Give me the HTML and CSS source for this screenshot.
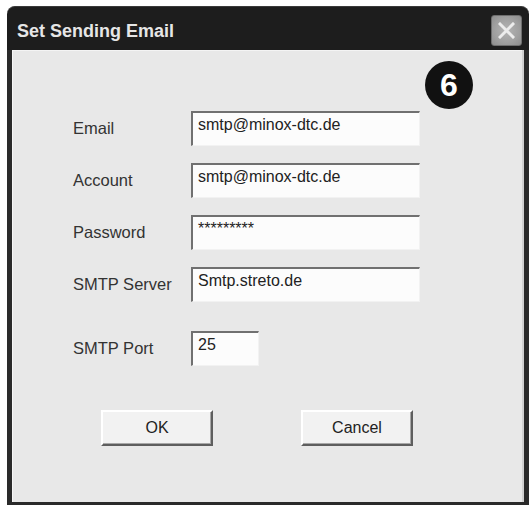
FILE: index.html
```html
<!DOCTYPE html>
<html>
<head>
<meta charset="utf-8">
<title>Set Sending Email</title>
<link rel="stylesheet" href="styles.css">
</head>
<body>
<div class="window">
  <div class="titlebar">
    <span class="title">Set Sending Email</span>
    <button class="close" aria-label="Close">
      <svg width="17" height="17" viewBox="0 0 17 17"><path d="M2 2 L15 15 M15 2 L2 15" stroke="#ececec" stroke-width="3" stroke-linecap="square"/></svg>
    </button>
  </div>
  <div class="body">
    <div class="badge">6</div>
    <div class="form">
      <div class="row"><span class="label">Email</span><div class="field wide">smtp@minox-dtc.de</div></div>
      <div class="row"><span class="label">Account</span><div class="field wide">smtp@minox-dtc.de</div></div>
      <div class="row"><span class="label">Password</span><div class="field wide pw">*********</div></div>
      <div class="row"><span class="label">SMTP Server</span><div class="field wide">Smtp.streto.de</div></div>
      <div class="row port"><span class="label">SMTP Port</span><div class="field short">25</div></div>
    </div>
    <div class="buttons">
      <button class="btn">OK</button>
      <button class="btn">Cancel</button>
    </div>
  </div>
</div>
</body>
</html>
```
FILE: styles.css
```css
body {
  margin: 0;
  background: #ffffff;
  font-family: "Liberation Sans", Arial, sans-serif;
}
.window {
  margin: 6px 0 0 7px;
  width: 522px;
  height: 499px;
  display: flex;
  flex-direction: column;
}
.titlebar {
  height: 44px;
  flex: none;
  box-sizing: border-box;
  background: #1d1d1d;
  border-radius: 8px 8px 0 0;
  border-top: 1px solid #3a3a3a;
  display: flex;
  align-items: center;
  justify-content: space-between;
  padding: 0 7px 0 10px;
}
.title {
  color: #e6e6e6;
  font-weight: bold;
  font-size: 18px;
  padding-top: 6px;
}
.close {
  width: 31px;
  height: 31px;
  margin-top: 3px;
  padding: 0;
  background: radial-gradient(circle at 50% 50%, #b4b4b4 0%, #a0a0a0 60%, #8e8e8e 100%);
  border: 1px solid #6e6e6e;
  border-radius: 3px;
  display: flex;
  align-items: center;
  justify-content: center;
}
.body {
  flex: 1;
  position: relative;
  background: #e8e8e8;
  border-style: solid;
  border-color: #2a2a2a;
  border-width: 0 5px 3px 5px;
  box-shadow: inset 1px 0 0 #f6f6f6, inset -2px 0 0 #d0d0d0, inset 0 1px 0 #f4f4f4;
  padding: 61px 0 0 61px;
}
.badge {
  position: absolute;
  left: 413px;
  top: 11px;
  width: 48px;
  height: 48px;
  border-radius: 50%;
  background: #111;
  color: #fff;
  font-weight: bold;
  font-size: 32px;
  display: flex;
  align-items: center;
  justify-content: center;
}
.form {
  display: flex;
  flex-direction: column;
  gap: 17px;
}
.row {
  display: grid;
  grid-template-columns: 118px auto;
  align-items: center;
}
.row.port {
  margin-top: 12px;
}
.label {
  font-size: 16.5px;
  color: #333;
}
.field {
  height: 35px;
  box-sizing: border-box;
  background: #fcfcfc;
  border-top: 2px solid #707070;
  border-left: 2px solid #707070;
  border-right: 1px solid #f2f2f2;
  border-bottom: 1px solid #f2f2f2;
  padding: 3px 0 0 5px;
  font-size: 16px;
  color: #222;
}
.field.wide {
  width: 229px;
}
.field.short {
  width: 68px;
}
.buttons {
  display: flex;
  gap: 88px;
  margin: 44px 0 0 28px;
}
.btn {
  width: 112px;
  height: 36px;
  background: #f2f2f2;
  border: 2px solid;
  border-color: #ffffff #5e5e5e #5e5e5e #ffffff;
  box-shadow: inset -1px -1px 0 #a8a8a8;
  font-family: inherit;
  font-size: 16px;
  color: #222;
  padding: 0;
}
```
